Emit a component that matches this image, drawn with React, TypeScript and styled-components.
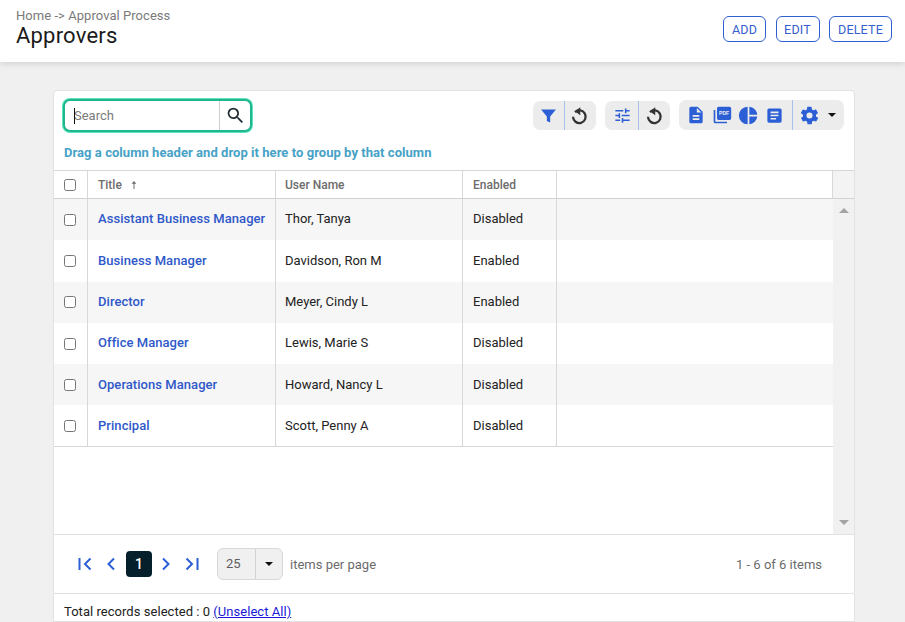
import React from "react";
import styled, { createGlobalStyle } from "styled-components";

const Global = createGlobalStyle`
  html, body { margin: 0; padding: 0; height: 622px; overflow: hidden; background: #f0f0f0; }
  body { font-family: Roboto, "Liberation Sans", sans-serif; font-size: 13px; color: #212529; }
  * { box-sizing: border-box; }
`;
const Page = styled.div`width: 905px; height: 622px; position: relative; overflow: hidden;`;
const Header = styled.header`
  height: 62px; background: #fff; box-shadow: 0 2px 6px rgba(0,0,0,.13);
  display: flex; justify-content: space-between; padding: 0 13px 0 16px; position: relative;
`;
const Crumb = styled.div`font-size: 13px; line-height: 15px; color: #7a7a7a; margin-top: 8px; letter-spacing: .05px;`;
const PageTitle = styled.h1`font-size: 22px; font-weight: 400; line-height: 26px; margin: 0; color: #1b1b1b; letter-spacing: .2px;`;
const Actions = styled.div`display: flex; gap: 9.5px; padding-top: 16px;`;
const ActionBtn = styled.button<{ $w: number }>`
  width: ${p => p.$w}px; height: 26px; padding: 0; border: 1px solid #2f5fd0; border-radius: 6px; background: #fff;
  color: #3560cf; font: 400 12.5px Roboto, sans-serif; letter-spacing: .2px;
`;
const Card = styled.section`
  position: absolute; left: 53px; top: 90px; width: 802px; height: 504px; background: #fff;
  border: 1px solid #e2e2e2; border-radius: 4px 4px 2px 2px;
`;
const Toolbar = styled.div`height: 79px; position: relative;`;
const SearchBox = styled.div`
  position: absolute; left: 9px; top: 8px; width: 189px; height: 33px; background: #fff;
  border: 2px solid #1fb88e; border-radius: 7px; box-shadow: 0 0 0 1px #5fe3bd; display: flex;
`;
const SearchInput = styled.div`
  flex: 1; position: relative; padding-left: 9px; line-height: 29px; color: #7b7b7b; font-size: 13px;
  &::before { content: ""; position: absolute; left: 9px; top: 7px; width: 1px; height: 16px; background: #111; }
`;
const SearchBtn = styled.div`
  width: 31px; border-left: 1px solid #cfcfcf; display: flex; align-items: center; justify-content: center;
`;
const Hint = styled.div`
  position: absolute; left: 10px; top: 54px; font-size: 13px; font-weight: 700; line-height: 16px; color: #46a2c6; letter-spacing: .05px;
`;
const IconGroup = styled.div<{ $left: number; $width: number; $top: number; $h: number }>`
  position: absolute; left: ${p => p.$left}px; width: ${p => p.$width}px; top: ${p => p.$top}px; height: ${p => p.$h}px;
  background: #ececec; border-radius: 7px; display: flex; align-items: center;
`;
const Cell = styled.span<{ $w: number; $sep?: boolean; $shift?: number; $inset?: number }>`
  width: ${p => p.$w}px; height: 100%; display: flex; align-items: center; justify-content: center;
  border-right: ${p => (p.$sep ? "1px solid #a9bfec" : "none")}; flex: none;
  margin-left: ${p => p.$shift ?? 0}px;
  padding-left: ${p => p.$inset ?? 0}px;
`;
const Grid = styled.div`border-top: 1px solid #d6d6d6; border-bottom: 1px solid #e2e2e2; height: 365px; position: relative;`;
const HeadRow = styled.div`display: flex; height: 28px; border-bottom: 1px solid #d2d2d2;`;
const Col = styled.div<{ $w: number; $pad?: number; $lift?: boolean }>`
  width: ${p => p.$w}px; flex: none; display: flex; align-items: center; padding-left: ${p => p.$pad ?? 0}px;
  padding-bottom: ${p => (p.$lift ? "1.5px" : "0")};
  border-right: 1px solid #d8d8d8; white-space: nowrap;
`;
const CheckCol = styled(Col)`justify-content: center; padding-right: 2px;`;
const HeadText = styled.span`color: #6d6d6d; font-size: 12px; font-weight: 500;`;
const Arrow = styled.span`margin-left: 8px; display: inline-flex;`;
const ScrollHead = styled.div`flex: 1; background: #f3f3f3;`;
const Body = styled.div`position: relative; height: 335px;`;
const Row = styled.div<{ $odd: boolean }>`
  display: flex; height: 41.3px; width: 779px; background: ${p => (p.$odd ? "#f6f6f6" : "#fff")};
`;
const Rows = styled.div`
  width: 779px; position: relative;
  &::after { content: ""; position: absolute; left: 0; right: 0; top: 247px; height: 1px; background: #d8d8d8; }
`;
const Box = styled.span`
  width: 12px; height: 12px; border: 1px solid #767676; border-radius: 2.5px; background: #fff; display: block;
`;
const TitleLink = styled.a`color: #2f58c9; font-size: 13px; font-weight: 500; letter-spacing: .05px;`;
const CellText = styled.span`color: #222; font-size: 13px;`;
const ScrollBar = styled.div`
  position: absolute; right: 0; top: 0; bottom: 0; width: 21px; background: #f1f1f1;
  display: flex; flex-direction: column; justify-content: space-between; align-items: center; padding: 9px 0 9px;
`;
const Tri = styled.span<{ $up?: boolean; $color?: string; $size?: number }>`
  width: 0; height: 0; border-left: ${p => p.$size ?? 5}px solid transparent; border-right: ${p => p.$size ?? 5}px solid transparent;
  ${p => (p.$up ? "border-bottom" : "border-top")}: ${p => p.$size ?? 5}px solid ${p => p.$color ?? "#a3a3a3"};
`;
const Pager = styled.div`height: 58px; position: relative;`;
const NavBtn = styled.span<{ $left: number }>`
  position: absolute; left: ${p => p.$left}px; top: 20px; width: 18px; height: 18px; display: flex; align-items: center; justify-content: center;
`;
const PageNum = styled.span`
  position: absolute; left: 72px; top: 16px; width: 26px; height: 26px; background: #06202b; color: #fff;
  border-radius: 4px; display: flex; align-items: center; justify-content: center; font-size: 14px; font-weight: 500;
`;
const SizeSelect = styled.div`
  position: absolute; left: 163px; top: 13px; width: 66px; height: 32px; background: #f0f0f0; border: 1px solid #d8d8d8;
  border-radius: 6px; display: flex; align-items: center; color: #5e5e5e; font-size: 13px;
`;
const SizeVal = styled.span`width: 38px; padding-left: 8px; line-height: 30px; border-right: 1px solid #d2d2d2;`;
const SizeArrow = styled.span`flex: 1; display: flex; justify-content: center;`;
const PagerLabel = styled.span`position: absolute; left: 236px; top: 22px; color: #6b6b6b; font-size: 13px; line-height: 16px;`;
const PagerCount = styled.span`position: absolute; right: 32px; top: 22px; color: #6b6b6b; font-size: 13px; line-height: 16px;`;
const FooterWrap = styled.div`
  position: absolute; left: 53px; top: 594px; width: 802px; height: 28px; background: #fff; border: 1px solid #e2e2e2; border-top: 0;
`;
const Footer = styled.div`padding: 10px 0 0 10px; font-size: 13px; line-height: 16px; color: #222; letter-spacing: .04px;`;
const Unselect = styled.a`color: #1a1ad6; text-decoration: underline;`;

const B = "#2c5fd6";
const Sv = ({ children, s = 18, vb = "0 0 24 24" }: { children: React.ReactNode; s?: number; vb?: string }) => (
  <svg width={s} height={s} viewBox={vb} aria-hidden="true">{children}</svg>
);
const Undo = () => (
  <Sv s={20}>
    <path d="M7.200 7.300A7.600 7.600 0 1 1 4.800 13" fill="none" stroke="#333" strokeWidth="2.700" />
    <path d="M13.500 1.500 7 6.300l6.500 4.800z" fill="#333" />
  </Sv>
);
const Filter = () => <Sv s={21}><path d="M3.500 5h17l-6.600 8.200V20l-3.800-1.800v-5z" fill={B} /></Sv>;
const Tune = () => (
  <Sv s={19}><path d="M3 17v2h6v-2H3zM3 5v2h10V5H3zm10 16v-2h8v-2h-8v-2h-2v6h2zM7 9v2H3v2h4v2h2V9H7zm14 4v-2H11v2h10zm-6-4h2V7h4V5h-4V3h-2v6z" fill={B} /></Sv>
);
const Doc = () => (
  <Sv s={20}><path d="M14 2H6a2 2 0 0 0-2 2v16a2 2 0 0 0 2 2h12a2 2 0 0 0 2-2V8l-6-6zm2 16H8v-2h8v2zm0-4H8v-2h8v2zm-3-5V3.500L18.500 9H13z" fill={B} /></Sv>
);
const PdfLabel = styled.text`font: 700 6px "Liberation Sans", sans-serif; fill: #ececec;`;
const Pdf = () => (
  <Sv s={20}>
    <path d="M21 2H8a2 2 0 0 0-2 2v12a2 2 0 0 0 2 2h13a2 2 0 0 0 2-2V4a2 2 0 0 0-2-2zM4 6H2v14a2 2 0 0 0 2 2h14v-2H4V6z" fill={B} />
    <PdfLabel x="14.500" y="12" textAnchor="middle">PDF</PdfLabel>
  </Sv>
);
const Pie = () => (
  <Sv s={21}><path d="M11 2v20A10 10 0 0 1 11 2zm2 0v9h9a10 10 0 0 0-9-9zm0 11v9a10 10 0 0 0 9-9h-9z" fill={B} /></Sv>
);
const Lines = () => (
  <Sv s={19}><path d="M19 3H5a2 2 0 0 0-2 2v14a2 2 0 0 0 2 2h14a2 2 0 0 0 2-2V5a2 2 0 0 0-2-2zm-5 14H7v-2h7v2zm3-4H7v-2h10v2zm0-4H7V7h10v2z" fill={B} /></Sv>
);
const Gear = () => (
  <Sv s={21}><path d="M19.400 13a7.500 7.500 0 0 0 0-2l2.100-1.600a.5.5 0 0 0 .1-.6l-2-3.500a.5.5 0 0 0-.6-.2l-2.500 1a7.300 7.300 0 0 0-1.700-1l-.4-2.600a.5.5 0 0 0-.5-.5h-4a.5.5 0 0 0-.5.4l-.4 2.700a7.700 7.700 0 0 0-1.700 1l-2.500-1a.5.5 0 0 0-.6.2l-2 3.500a.5.5 0 0 0 .1.6L4.600 11a7.500 7.500 0 0 0 0 2l-2.100 1.600a.5.5 0 0 0-.1.6l2 3.500c.1.2.4.3.6.2l2.500-1c.5.4 1.100.8 1.700 1l.4 2.600c0 .3.2.5.5.5h4c.2 0 .5-.2.5-.4l.4-2.700a7.700 7.700 0 0 0 1.700-1l2.500 1c.2.1.5 0 .6-.2l2-3.500a.5.5 0 0 0-.1-.6zM12 15.500a3.500 3.500 0 1 1 0-7 3.500 3.500 0 0 1 0 7z" fill={B} /></Sv>
);
const Nav = ({ d }: { d: string }) => (
  <Sv s={18} vb="0 0 18 18"><path d={d} fill="none" stroke={B} strokeWidth="2" /></Sv>
);

const rows = [
  ["Assistant Business Manager", "Thor, Tanya", "Disabled"],
  ["Business Manager", "Davidson, Ron M", "Enabled"],
  ["Director", "Meyer, Cindy L", "Enabled"],
  ["Office Manager", "Lewis, Marie S", "Disabled"],
  ["Operations Manager", "Howard, Nancy L", "Disabled"],
  ["Principal", "Scott, Penny A", "Disabled"],
];

export default function App() {
  return (
    <Page>
      <Global />
      <Header>
        <div>
          <Crumb>Home -&gt; Approval Process</Crumb>
          <PageTitle>Approvers</PageTitle>
        </div>
        <Actions>
          <ActionBtn $w={43}>ADD</ActionBtn>
          <ActionBtn $w={44}>EDIT</ActionBtn>
          <ActionBtn $w={63}>DELETE</ActionBtn>
        </Actions>
      </Header>
      <Card>
        <Toolbar>
          <SearchBox>
            <SearchInput>Search</SearchInput>
            <SearchBtn>
              <Sv s={21}><path d="M15.500 14h-.79l-.28-.27A6.470 6.470 0 0 0 16 9.500 6.500 6.500 0 1 0 9.500 16c1.610 0 3.090-.59 4.230-1.570l.27.28v.79l5 4.990L20.490 19l-4.990-5zm-6 0C7.010 14 5 11.990 5 9.500S7.010 5 9.500 5 14 7.010 14 9.500 11.990 14 9.500 14z" fill="#1f2d36" /></Sv>
            </SearchBtn>
          </SearchBox>
          <IconGroup $left={479} $width={63} $top={10} $h={29}>
            <Cell $w={32} $sep><Filter /></Cell>
            <Cell $w={28}><Undo /></Cell>
          </IconGroup>
          <IconGroup $left={551} $width={65} $top={10} $h={29}>
            <Cell $w={34} $sep $inset={2}><Tune /></Cell>
            <Cell $w={30}><Undo /></Cell>
          </IconGroup>
          <IconGroup $left={625} $width={165} $top={9} $h={30}>
            <Cell $w={27} $shift={3}><Doc /></Cell>
            <Cell $w={26}><Pdf /></Cell>
            <Cell $w={26}><Pie /></Cell>
            <Cell $w={26}><Lines /></Cell>
            <Cell $w={6} $sep />
            <Cell $w={32}><Gear /></Cell>
            <Cell $w={14}><Tri $color="#111" $size={4} /></Cell>
          </IconGroup>
          <Hint>Drag a column header and drop it here to group by that column</Hint>
        </Toolbar>
        <Grid>
          <HeadRow>
            <CheckCol $w={34}><Box /></CheckCol>
            <Col $w={188} $pad={10}>
              <HeadText>Title</HeadText>
              <Arrow>
                <svg width="8" height="10" viewBox="0 0 8 10" aria-hidden="true"><path d="M4 1 1.600 3.800h1.900V9h1V3.800h1.900z" fill="#6d6d6d" /></svg>
              </Arrow>
            </Col>
            <Col $w={187} $pad={9}><HeadText>User Name</HeadText></Col>
            <Col $w={94} $pad={10}><HeadText>Enabled</HeadText></Col>
            <Col $w={276} />
            <ScrollHead />
          </HeadRow>
          <Body>
            <Rows>
              {rows.map((r, i) => (
                <Row key={r[0]} $odd={i % 2 === 0}>
                  <CheckCol $w={34}><Box /></CheckCol>
                  <Col $w={188} $pad={10} $lift><TitleLink>{r[0]}</TitleLink></Col>
                  <Col $w={187} $pad={9} $lift><CellText>{r[1]}</CellText></Col>
                  <Col $w={94} $pad={10} $lift><CellText>{r[2]}</CellText></Col>
                </Row>
              ))}
            </Rows>
            <ScrollBar><Tri $up /><Tri /></ScrollBar>
          </Body>
        </Grid>
        <Pager>
          <NavBtn $left={22}><Nav d="M3.500 3v12M14.500 3.500 9 9l5.500 5.500" /></NavBtn>
          <NavBtn $left={48}><Nav d="M12 3.500 6.500 9l5.500 5.500" /></NavBtn>
          <PageNum>1</PageNum>
          <NavBtn $left={103}><Nav d="M6 3.500 11.500 9 6 14.500" /></NavBtn>
          <NavBtn $left={129}><Nav d="M3.500 3.500 9 9l-5.500 5.500M14.500 3v12" /></NavBtn>
          <SizeSelect>
            <SizeVal>25</SizeVal>
            <SizeArrow><Tri $color="#111" $size={4} /></SizeArrow>
          </SizeSelect>
          <PagerLabel>items per page</PagerLabel>
          <PagerCount>1 - 6 of 6 items</PagerCount>
        </Pager>
      </Card>
      <FooterWrap>
        <Footer>Total records selected : 0 <Unselect href="#">(Unselect All)</Unselect></Footer>
      </FooterWrap>
    </Page>
  );
}
